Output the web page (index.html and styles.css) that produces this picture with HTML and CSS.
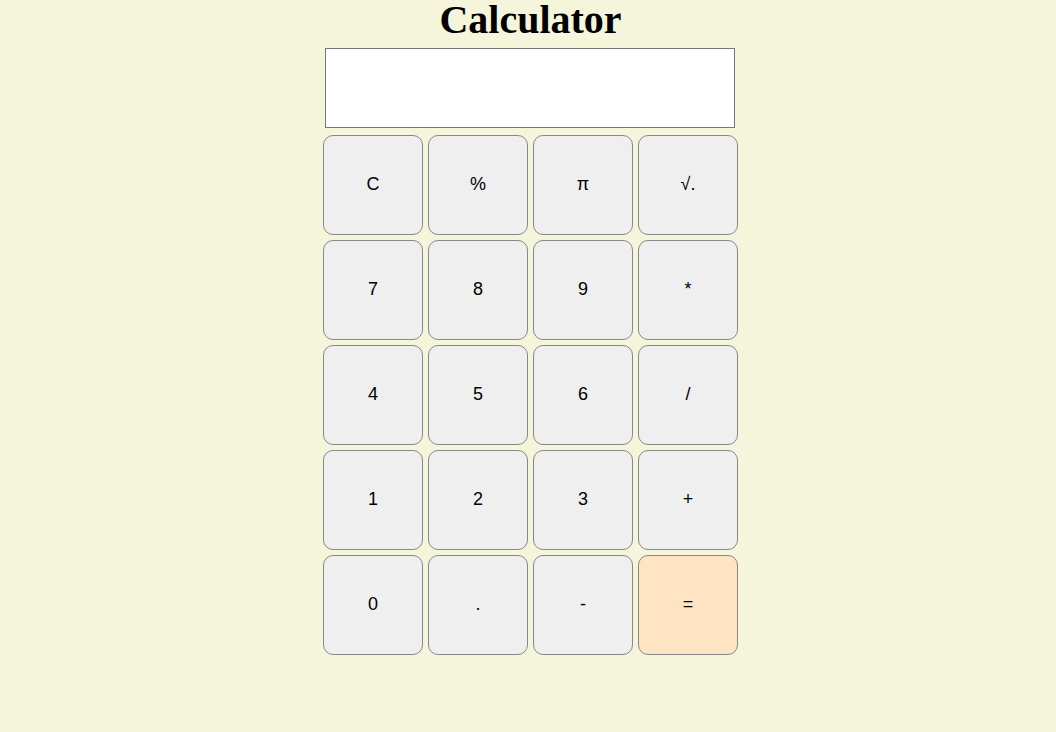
FILE: index.html
```html
<!DOCTYPE html>
<html>
<head>
<meta charset="utf-8">
<link rel="stylesheet" href="styles.css">
</head>
<body>
<main class="page">
  <div class="calc">
    <h1 class="title">Calculator</h1>
    <input class="display" type="text">
    <div class="keys">
      <button class="key">C</button>
      <button class="key">%</button>
      <button class="key">π</button>
      <button class="key">√.</button>
      <button class="key">7</button>
      <button class="key">8</button>
      <button class="key">9</button>
      <button class="key">*</button>
      <button class="key">4</button>
      <button class="key">5</button>
      <button class="key">6</button>
      <button class="key">/</button>
      <button class="key">1</button>
      <button class="key">2</button>
      <button class="key">3</button>
      <button class="key">+</button>
      <button class="key">0</button>
      <button class="key">.</button>
      <button class="key">-</button>
      <button class="key key-eq">=</button>
    </div>
  </div>
</main>
</body>
</html>
```
FILE: styles.css
```css
html, body {
  margin: 0;
  padding: 0;
  background: #f5f5dc;
}
.page {
  display: flex;
  justify-content: center;
  padding-left: 5px;
}
.calc {
  width: 415px;
  display: flex;
  flex-direction: column;
  align-items: center;
}
.title {
  margin: -2px 0 -2px 0;
  font-family: "Liberation Serif", "Times New Roman", serif;
  font-weight: bold;
  font-size: 40px;
  line-height: 44px;
  color: #000;
}
.display {
  box-sizing: border-box;
  align-self: flex-start;
  width: 410px;
  height: 80px;
  margin: 8px 0 0 2px;
  border: 1px solid #767676;
  background: #fff;
  padding: 0;
  font-family: "Liberation Sans", Arial, sans-serif;
  font-size: 24px;
}
.keys {
  margin-top: 7px;
  display: grid;
  grid-template-columns: repeat(4, 100px);
  grid-auto-rows: 100px;
  gap: 5px;
}
.key {
  box-sizing: border-box;
  width: 100px;
  height: 100px;
  margin: 0;
  padding: 0 0 2px 0;
  border: 1px solid #888;
  border-radius: 10px;
  background: #efefef;
  color: #000;
  font-family: "Liberation Sans", Arial, sans-serif;
  font-size: 18px;
}
.key-eq {
  background: #ffe4c4;
}
```
